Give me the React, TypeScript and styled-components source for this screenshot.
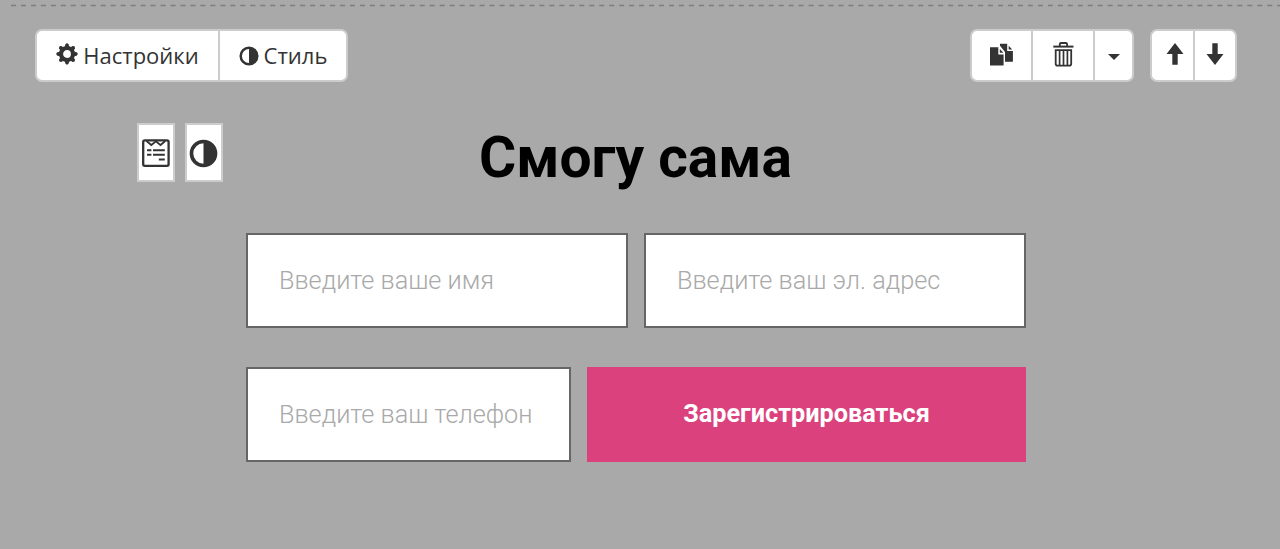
import React from 'react'
import styled, { createGlobalStyle } from 'styled-components'

const GlobalStyle = createGlobalStyle`
    * {
        box-sizing: border-box;
    }

    body {
        margin: 0;
        background: #a9a9a9;
        overflow: hidden;
    }

    button, input {
        font: inherit;
        margin: 0;
        appearance: none;
    }
`

const GearIcon = () => {
    const teeth = [0, 45, 90, 135, 180, 225, 270, 315]
    return (
        <svg width="22" height="22" viewBox="0 0 22 22" fill="#333">
            <circle cx="11" cy="11" r="6" fill="none" stroke="#333" strokeWidth="4.2" />
            {teeth.map((angle) => (
                <path key={angle} d="M8.8 4 9.3 1.4Q11-.9 12.7 1.4L13.2 4Z" transform={`rotate(${angle} 11 11)`} />
            ))}
        </svg>
    )
}

const ContrastIcon = ({ size }: { size: number }) => (
    <svg width={size} height={size} viewBox="0 0 20 20">
        <circle cx="10" cy="10" r="8.3" fill="none" stroke="#333" strokeWidth="2.5" />
        <path d="M10 1a9 9 0 0 1 0 18Z" fill="#333" />
    </svg>
)

const CopyIcon = () => (
    <svg width="24" height="23" viewBox="0 0 24 23" fill="#333">
        <path d="M0 4.3H8.3V11.5H13.6V22.5H0Z" />
        <path d="M9.8 6 13.4 9.8H9.8Z" />
        <path d="M10 .7H17.2V8H22.9V18.7H15V9L10 2.8Z" />
        <path d="M18.7 2.8 22.2 6.4H18.7Z" />
    </svg>
)

const TrashIcon = () => (
    <svg width="21" height="25" viewBox="0 0 21 25" fill="none" stroke="#333">
        <path d="M.3 4.6H20.5" strokeWidth="2" />
        <path d="M6.8 4.5V2.2Q6.8 1 8 1H12.9Q14.1 1 14.1 2.2V4.5" strokeWidth="1.8" />
        <path d="M2.7 8.1H18.2V21.8Q18.2 23.7 16.3 23.7H4.6Q2.7 23.7 2.7 21.8Z" strokeWidth="1.8" />
        <path d="M6.6 8V23.5M10.5 8V23.5M14.4 8V23.5" strokeWidth="1.7" />
    </svg>
)

const CaretIcon = () => (
    <svg width="12" height="6" viewBox="0 0 12 6" fill="#333">
        <path d="M0 0H12L6 6Z" />
    </svg>
)

const ArrowIcon = ({ down }: { down?: boolean }) => (
    <svg width="18" height="22" viewBox="0 0 18 22" fill="#333">
        <path d="M9 0 17.5 11H11.7V21.7H6.3V11H.5Z" transform={down ? 'rotate(180 9 11)' : undefined} />
    </svg>
)

const FormIcon = () => (
    <svg width="28" height="28" viewBox="0 0 28 28" fill="none" stroke="#333" strokeWidth="2">
        <rect x="1.2" y="1.4" width="25.4" height="25.4" rx="1.6" strokeWidth="2.3" />
        <path d="M4.5 2 9.3 6 13.9 2.4 18.5 6 23.3 2" strokeWidth="1.8" />
        <path d="M5 11.2H9.4M11 11.2H22.8M5 15.8H9.4M11 15.8H22.8M16.8 20.4H22.8" />
    </svg>
)

const App: React.FC = () => {
    return (
        <Block>
            <GlobalStyle />
            <DashedTop width="1269" height="3" viewBox="0 0 1269 3">
                <path d="M0 1.5H1269" stroke="#7e7e7e" strokeWidth="1.6" strokeDasharray="5 4.97" />
            </DashedTop>
            <Toolbar>
                <ButtonGroup>
                    <ToolButton $width={183}><GearIcon /><Label>Настройки</Label></ToolButton>
                    <ToolButton $width={130}><IconDrop><ContrastIcon size={20} /></IconDrop><Label>Стиль</Label></ToolButton>
                </ButtonGroup>
                <Actions>
                    <ButtonGroup>
                        <ToolButton $width={61} $shift={1}><CopyIcon /></ToolButton>
                        <ToolButton $width={62}><TrashIcon /></ToolButton>
                        <ToolButton $width={41} $drop={5}><CaretIcon /></ToolButton>
                    </ButtonGroup>
                    <ButtonGroup>
                        <ToolButton $width={43} $shift={4}><ArrowIcon /></ToolButton>
                        <ToolButton $width={44} $shift={-1}><ArrowIcon down /></ToolButton>
                    </ButtonGroup>
                </Actions>
            </Toolbar>
            <Header>
                <SideTools>
                    <SideButton><FormIcon /></SideButton>
                    <SideButton><ContrastIcon size={29} /></SideButton>
                </SideTools>
                <Title>Смогу сама</Title>
            </Header>
            <Form>
                <Row>
                    <Input $width={382} placeholder="Введите ваше имя" />
                    <Input $width={382} placeholder="Введите ваш эл. адрес" />
                </Row>
                <Row>
                    <Input $width={325} placeholder="Введите ваш телефон" />
                    <Submit type="button">Зарегистрироваться</Submit>
                </Row>
            </Form>
        </Block>
    );
}

export default App;

const Block = styled.div`
    width: 1280px;
    height: 549px;
    padding-top: 4px;
    overflow: hidden;
    background: #a9a9a9;
`

const DashedTop = styled.svg`
    display: block;
    margin-left: 11px;
`

const Toolbar = styled.div`
    display: flex;
    justify-content: space-between;
    margin-top: 22px;
    padding: 0 43px 0 35px;
`

const Actions = styled.div`
    display: flex;
    gap: 16px;
`

const ButtonGroup = styled.div`
    display: flex;
`

const ToolButton = styled.button<{ $width: number; $shift?: number; $drop?: number }>`
    display: flex;
    align-items: center;
    justify-content: center;
    width: ${({ $width }) => $width}px;
    height: 53px;
    padding: ${({ $drop = 0 }) => $drop}px ${({ $shift = 0 }) => Math.max(-$shift, 0)}px 3px ${({ $shift = 0 }) => Math.max($shift, 0)}px;
    border: 2px solid #ccc;
    border-right-width: 0;
    background: white;
    color: #333;
    font-family: 'Open Sans', sans-serif;
    font-size: 22px;

    &:first-child {
        border-radius: 7px 0 0 7px;
    }

    &:last-child {
        border-right-width: 2px;
        border-radius: 0 7px 7px 0;
    }
`

const IconDrop = styled.span`
    display: flex;
    padding-top: 3px;
`

const Label = styled.span`
    margin-left: 5px;
    padding-top: 1px;
`

const Header = styled.div`
    display: flex;
    align-items: flex-start;
    height: 110px;
    margin-top: 41px;
    padding-left: 137px;
`

const SideTools = styled.div`
    display: flex;
    gap: 10px;
`

const SideButton = styled.button`
    display: flex;
    align-items: center;
    justify-content: center;
    width: 38px;
    height: 59px;
    padding: 1px 1px 0 0;
    border: 2px solid #ccc;
    background: white;
`

const Title = styled.h1`
    margin: 0 0 0 256px;
    color: black;
    font-family: Roboto, sans-serif;
    font-size: 56.9px;
    font-weight: 700;
    line-height: 69px;
    white-space: nowrap;
`

const Form = styled.form`
    display: flex;
    flex-direction: column;
    gap: 39px;
    width: 780px;
    margin-left: 246px;
    font-family: Roboto, sans-serif;
    font-size: 25.25px;
`

const Row = styled.div`
    display: flex;
    gap: 16px;
`

const Input = styled.input<{ $width: number }>`
    width: ${({ $width }) => $width}px;
    height: 95px;
    padding: 0 31px;
    border: 2px solid #666;
    border-radius: 0;
    background: white;
    font-weight: 300;

    &::placeholder {
        color: #a9a9a9;
        opacity: 1;
    }
`

const Submit = styled.button`
    flex: 1;
    height: 95px;
    padding: 0 0 2px;
    border: none;
    background: #db427d;
    color: white;
    font-weight: 700;
`
